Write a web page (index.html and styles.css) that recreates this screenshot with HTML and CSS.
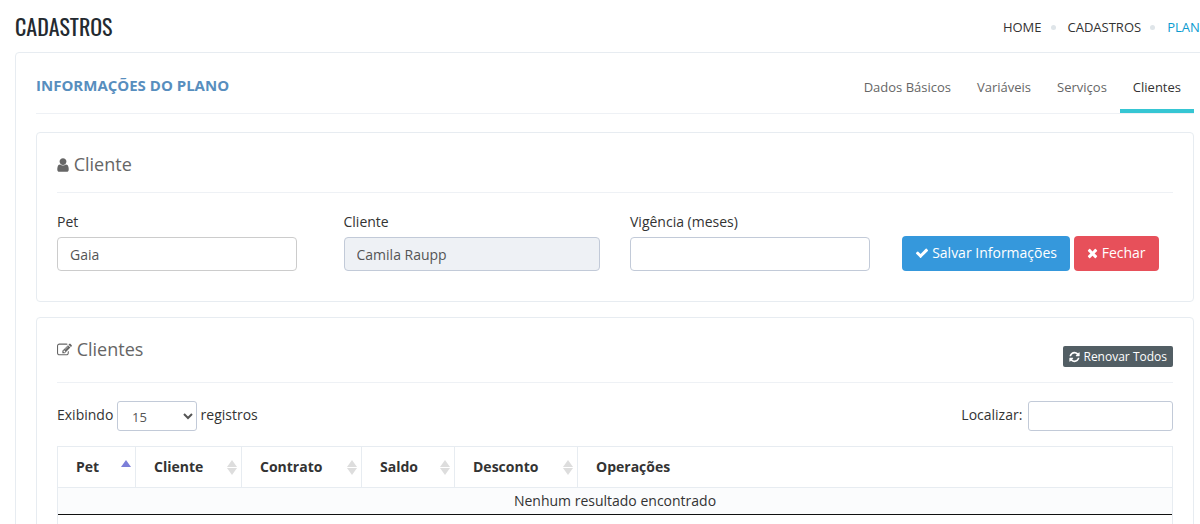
FILE: index.html
```
<!DOCTYPE html>
<html lang="pt-br">

<head>
  <meta charset="UTF-8">
  <title>Cadastros - Plano</title>
  <link rel="stylesheet" href="styles.css">
</head>

<body>

  <div class="page">
    <header class="page-head">
      <h1>CADASTROS</h1>
      <nav class="breadcrumb">
        <a href="#">HOME</a>
        <i class="dot"></i>
        <a href="#">CADASTROS</a>
        <i class="dot"></i>
        <a href="#" class="current">PLANOS</a>
      </nav>
    </header>

    <main class="panel">
      <div class="panel-title">
        <h2>INFORMAÇÕES DO PLANO</h2>
        <nav class="tabs">
          <a href="#">Dados Básicos</a>
          <a href="#">Variáveis</a>
          <a href="#">Serviços</a>
          <a href="#" class="active">Clientes</a>
        </nav>
      </div>

      <section class="card">
        <div class="card-title">
          <h3>
            <svg class="icon icon-user" viewBox="0 0 1280 1792"><path d="M1280 1399q0 109-62.5 187t-150.5 78h-854q-88 0-150.5-78t-62.5-187q0-85 8.5-160.5t31.5-152 58.5-131 94-89 134.5-34.5q131 128 313 128t313-128q76 0 134.5 34.5t94 89 58.5 131 31.5 152 8.5 160.5zm-256-887q0 159-112.5 271.5t-271.5 112.5-271.5-112.5-112.5-271.5 112.5-271.5 271.5-112.5 271.5 112.5 112.5 271.5z"/></svg>
            Cliente
          </h3>
        </div>
        <form class="client-form">
          <div class="field short">
            <label for="pet">Pet</label>
            <input id="pet" class="pet" type="text" value="Gaia">
          </div>
          <div class="field">
            <label for="cliente">Cliente</label>
            <input id="cliente" type="text" value="Camila Raupp" readonly>
          </div>
          <div class="field short">
            <label for="vigencia">Vigência (meses)</label>
            <input id="vigencia" type="text">
          </div>
          <div class="actions">
            <button type="button" class="btn blue">
              <svg class="icon" viewBox="0 0 1792 1792"><path d="M1671 566q0 40-28 68l-724 724-136 136q-28 28-68 28t-68-28l-136-136-362-362q-28-28-28-68t28-68l136-136q28-28 68-28t68 28l294 295 656-657q28-28 68-28t68 28l136 136q28 28 28 68z"/></svg>
              Salvar Informações
            </button>
            <button type="button" class="btn red">
              <svg class="icon icon-times" viewBox="192 0 1408 1792"><path d="M1490 1322q0 40-28 68l-136 136q-28 28-68 28t-68-28l-294-294-294 294q-28 28-68 28t-68-28l-136-136q-28-28-28-68t28-68l294-294-294-294q-28-28-28-68t28-68l136-136q28-28 68-28t68 28l294 294 294-294q28-28 68-28t68 28l136 136q28 28 28 68t-28 68l-294 294 294 294q28 28 28 68z"/></svg>
              Fechar
            </button>
          </div>
        </form>
      </section>

      <section class="card">
        <div class="card-title tall">
          <h3>
            <svg class="icon icon-edit" viewBox="0 0 1792 1792"><path d="M888 1184l116-116-152-152-116 116v56h96v96h56zm440-720q-16-16-33 1l-350 350q-17 17-1 33t33-1l350-350q17-17 1-33zm80 594v190q0 119-84.5 203.5t-203.5 84.5h-832q-119 0-203.5-84.5t-84.5-203.5v-832q0-119 84.5-203.5t203.5-84.5h832q63 0 117 25 15 7 18 23 3 17-9 29l-49 49q-14 14-32 8-23-6-45-6h-832q-66 0-113 47t-47 113v832q0 66 47 113t113 47h832q66 0 113-47t47-113v-126q0-13 9-22l64-64q15-15 35-7t20 29zm-96-738l288 288-672 672h-288v-288zm444 132l-92 92-288-288 92-92q28-28 68-28t68 28l152 152q28 28 28 68t-28 68z"/></svg>
            Clientes
          </h3>
          <button type="button" class="btn small">
            <svg class="icon" viewBox="100 0 1592 1792"><path d="M1639 1056q0 5-1 7-64 268-268 434.5t-478 166.5q-146 0-282.5-55t-243.5-157l-129 129q-19 19-45 19t-45-19-19-45v-448q0-26 19-45t45-19h448q26 0 45 19t19 45-19 45l-137 137q71 66 161 102t187 36q134 0 250-65t186-179q11-17 53-117 8-23 30-23h192q13 0 22.5 9.5t9.5 22.5zm25-800v448q0 26-19 45t-45 19h-448q-26 0-45-19t-19-45 19-45l138-138q-148-137-349-137-134 0-250 65t-186 179q-11 17-53 117-8 23-30 23h-199q-13 0-22.5-9.5t-9.5-22.5v-7q65-268 270-434.5t480-166.5q146 0 284 55.5t245 156.5l130-129q19-19 45-19t45 19 19 45z"/></svg>
            Renovar Todos
          </button>
        </div>

        <div class="table-tools">
          <label>Exibindo
            <select>
              <option>5</option>
              <option selected>15</option>
              <option>30</option>
            </select>
            registros</label>
          <label class="search">Localizar: <input type="search"></label>
        </div>

        <div class="table-box">
          <table>
            <colgroup>
              <col class="col-pet">
              <col class="col-cliente">
              <col class="col-contrato">
              <col class="col-saldo">
              <col class="col-desconto">
              <col>
            </colgroup>
            <thead>
              <tr>
                <th class="sort asc">Pet</th>
                <th class="sort">Cliente</th>
                <th class="sort">Contrato</th>
                <th class="sort">Saldo</th>
                <th class="sort">Desconto</th>
                <th>Operações</th>
              </tr>
            </thead>
            <tbody>
              <tr>
                <td colspan="6">Nenhum resultado encontrado</td>
              </tr>
            </tbody>
          </table>
        </div>
      </section>
    </main>
  </div>

</body>

</html>
```

FILE: styles.css
```
* {
  box-sizing: border-box;
}

html {
  overflow: hidden;
}

body {
  margin: 0;
  font-family: "Open Sans", sans-serif;
  font-size: 14px;
  line-height: 20px;
  color: #333;
  background: #fff;
}

h1, h2, h3 {
  margin: 0;
}

a {
  color: inherit;
  text-decoration: none;
}

input, select, button {
  font-family: inherit;
  font-size: 14px;
}

/* bootstrap style row, runs past the right edge */
.page {
  margin: 0 -15px 0 15px;
}

.page-head {
  display: flex;
  justify-content: space-between;
  align-items: center;
  height: 52px;
}

h1 {
  font-family: Oswald, "Open Sans Condensed", "Liberation Sans Narrow", sans-serif;
  font-size: 22px;
  font-weight: 400;
  line-height: 32px;
  color: #242a30;
}

.breadcrumb {
  display: flex;
  align-items: center;
  margin-right: -2px;
  padding-top: 2px;
  font-size: 13px;
}

.breadcrumb .current {
  color: #0a9bd0;
}

.dot {
  width: 5px;
  height: 5px;
  margin: 0 12px 0 9px;
  border-radius: 50%;
  background: #dfe5e9;
}

.panel {
  padding: 0 20px 20px;
  border: 1px solid #e7ecf1;
  border-radius: 4px;
}

.panel-title {
  display: flex;
  justify-content: space-between;
  height: 61px;
  margin-bottom: 18px;
  border-bottom: 1px solid #eef1f5;
}

h2 {
  padding-top: 22px;
  font-size: 15px;
  font-weight: 700;
  line-height: 20px;
  color: #578ebe;
}

.tabs {
  display: flex;
}

.tabs a {
  padding: 24px 13px 12px;
  border-bottom: 4px solid transparent;
  font-size: 13px;
  color: #666;
}

.tabs .active {
  color: #333;
  border-color: #36c6d3;
}

.card {
  margin-bottom: 15px;
  padding: 12px 20px 30px;
  border: 1px solid #e7ecf1;
  border-radius: 4px;
}

.card-title {
  display: flex;
  justify-content: space-between;
  height: 48px;
  margin-bottom: 19px;
  border-bottom: 1px solid #eef1f5;
}

.tall {
  height: 53px;
  margin-bottom: 18px;
}

h3 {
  padding-top: 10px;
  font-size: 18px;
  font-weight: 400;
  line-height: 18px;
  color: #666;
}

.icon {
  width: 14px;
  height: 14px;
  fill: currentColor;
  vertical-align: -2px;
}

.icon-user {
  width: 12px;
  height: 16px;
}

.icon-edit {
  width: 15px;
  height: 16px;
}

.icon-times {
  width: 11px;
}

.client-form {
  display: grid;
  grid-template-columns: repeat(4, 1fr);
  column-gap: 30px;
}

.field label {
  display: block;
  margin-bottom: 5px;
}

.short {
  padding-right: 17px;
}

.field input {
  display: block;
  width: 100%;
  height: 34px;
  padding: 6px 12px;
  border: 1px solid #c2cad8;
  border-radius: 4px;
  color: #555;
  background: #fff;
}

.field .pet {
  border-color: #ccc;
}

.field input[readonly] {
  background: #eef1f5;
}

.actions {
  display: flex;
  align-items: flex-end;
  gap: 4px;
  margin-left: -15px;
}

.btn {
  height: 35px;
  padding: 0 12px 2px;
  border: 1px solid transparent;
  border-radius: 4px;
  color: #fff;
  white-space: nowrap;
  cursor: pointer;
}

.blue {
  background: #3598dc;
}

.red {
  background: #e7505a;
}

.small {
  height: 21px;
  margin-top: 16px;
  padding: 0 5px;
  border-radius: 2px;
  font-size: 12px;
  line-height: 18px;
  background: #525e64;
}

.small .icon {
  width: 11px;
  height: 12px;
}

.table-tools {
  display: flex;
  justify-content: space-between;
  margin-bottom: 15px;
}

.table-tools select,
.table-tools input {
  height: 30px;
  border: 1px solid #c2cad8;
  border-radius: 3px;
  color: #555;
  background: #fff;
  vertical-align: middle;
}

.table-tools select {
  width: 80px;
  padding: 5px 10px;
  font-size: 13px;
}

.table-tools input {
  width: 145px;
  margin-left: 2px;
}

.table-box {
  min-height: 120px;
  border: 1px solid #e7ecf1;
}

table {
  width: 100%;
  table-layout: fixed;
  border-collapse: separate;
  border-spacing: 0;
}

.col-pet {
  width: 78px;
}

.col-cliente {
  width: 106px;
}

.col-contrato {
  width: 120px;
}

.col-saldo {
  width: 93px;
}

.col-desconto {
  width: 123px;
}

th {
  position: relative;
  padding: 10px 18px;
  border-bottom: 1px solid #e7ecf1;
  font-weight: 700;
  text-align: left;
}

.sort {
  padding-right: 30px;
  border-right: 1px solid #e7ecf1;
}

.sort::before,
.sort::after {
  content: "";
  position: absolute;
  right: 4px;
  border: 5px solid transparent;
}

.sort::before {
  top: 13px;
  border-width: 0 5px 7px;
  border-bottom-color: #ddd;
}

.sort::after {
  top: 21px;
  border-width: 7px 5px 0;
  border-top-color: #ddd;
}

.asc::before {
  border-bottom-color: #7c7fd9;
}

.asc::after {
  display: none;
}

td {
  padding: 3px 10px;
  border-bottom: 1px solid #111;
  text-align: center;
  background: #fbfcfd;
}
```
